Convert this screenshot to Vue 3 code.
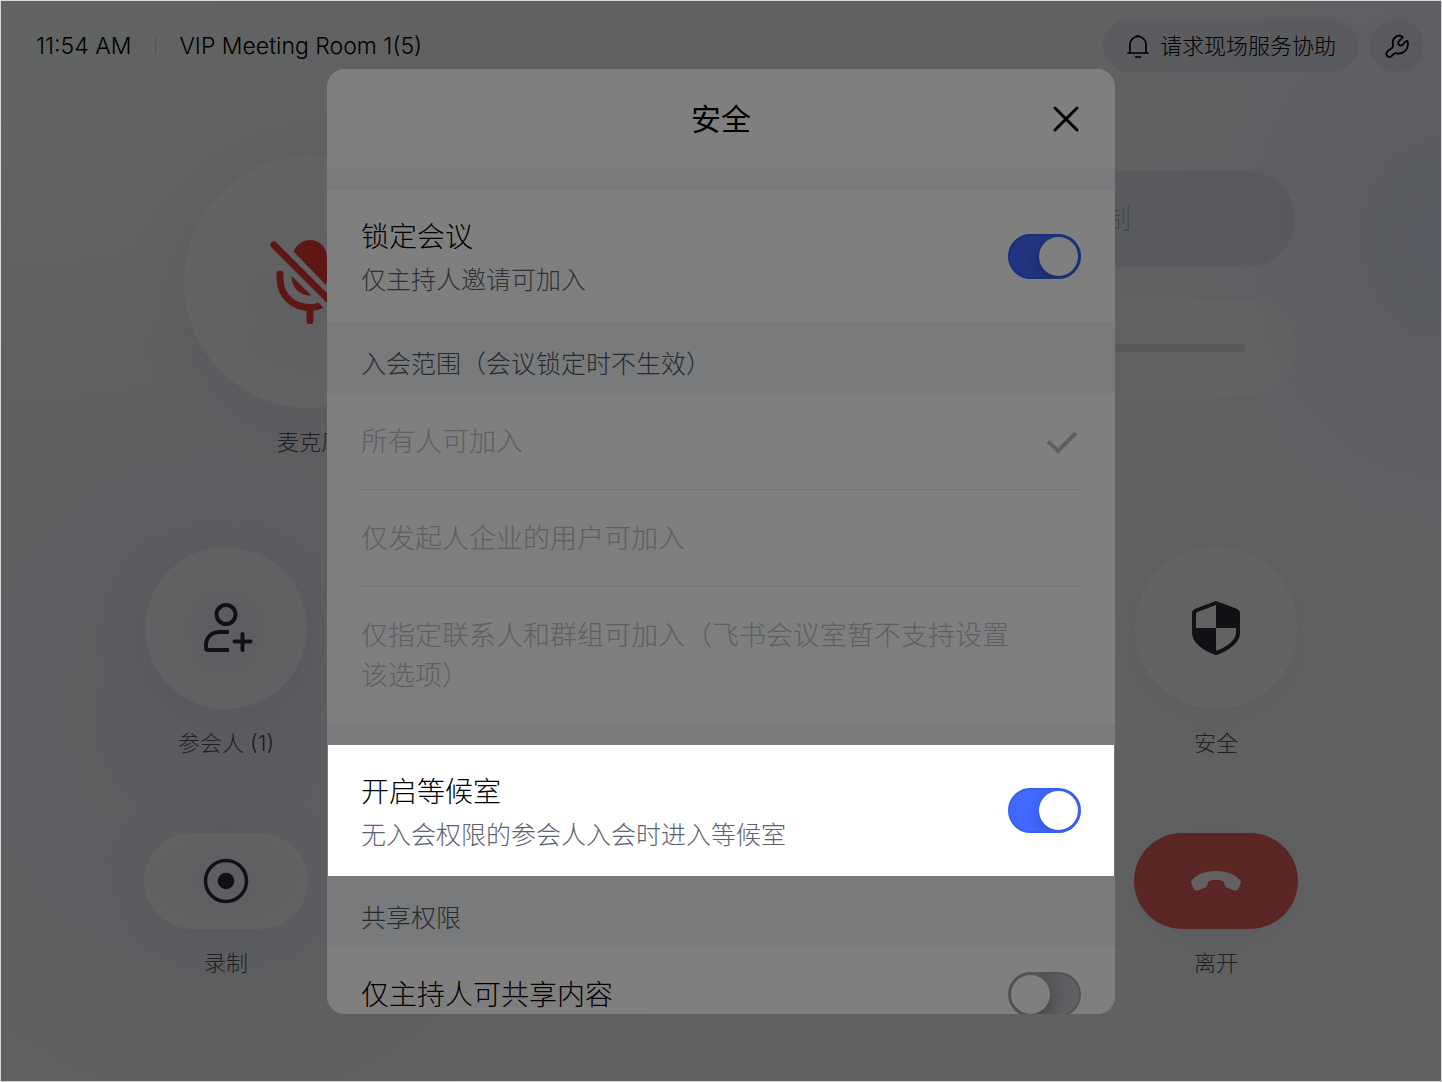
<script setup>
import { ref } from 'vue'

const locked = ref(true)
const waiting = ref(true)
const hostShare = ref(false)
const scope = ref('all')
const scopes = [
  { id: 'all', text: '所有人可加入' },
  { id: 'org', text: '仅发起人企业的用户可加入' },
  { id: 'picked', text: '仅指定联系人和群组可加入（飞书会议室暂不支持设置该选项）' },
]
</script>

<template>
  <div class="room">
    <header class="topbar">
      <time class="clock">11:54 AM</time>
      <span class="divider"></span>
      <span class="room-name">VIP Meeting Room 1(5)</span>
      <button class="assist" type="button">
        <svg width="24" height="24" viewBox="0 0 24 24" fill="none" stroke="currentColor" stroke-width="1.700" stroke-linecap="round" stroke-linejoin="round">
          <path d="M4 19V10.500a8 8 0 0 1 16 0V19" /><path d="M2 19h20M9.500 23h5M10.500 2h3" />
        </svg>
        <span class="assist-text">请求现场服务协助</span>
      </button>
      <button class="tool" type="button" aria-label="设置">
        <svg width="24" height="24" viewBox="0 0 24 24" fill="none" stroke="currentColor" stroke-width="1.800" stroke-linecap="round" stroke-linejoin="round">
          <path d="M16.500 2C12 .8 8 3.800 7.700 8.200c-.1 1.800.5 3 .2 4.300-.4 1.600-2.500 2.600-4.300 4-1.600 1.200-2.500 2.500-2.100 4.200.4 1.800 2.200 2.700 3.900 2.100 1.900-.7 2.700-3 4.300-3.500 1.100-.4 2.400.3 4.300.2 4.800-.2 8.600-3.900 8.900-8.600.1-1.500-.1-2.600-.5-3.500-.3-.6-.9-.7-1.400-.2l-3.300 3.400c-1.200 1.100-2.700 1-3.700 0s-1-2.500.1-3.600l3.200-3.300c.6-.6.400-1.400-.8-1.700z" />
        </svg>
      </button>
    </header>

    <main class="stage">
      <section class="row first">
        <div class="tile mic">
          <button type="button" class="disc big" aria-labelledby="l-mic">
            <svg width="80" height="84" viewBox="0 0 80 84">
              <g fill="#bc2e28">
                <path d="M23.500 11.500C27 4 33 0 40 0c10 0 17 8 17 18v20c0 3-.3 5-1 7z" />
                <path d="M21.500 36l20 19.500C30 56 21.500 48 21.500 36z" />
              </g>
              <g fill="none" stroke="#bc2e28" stroke-width="7" stroke-linecap="round">
                <path d="M4 5l70 70" /><path d="M40 69v12" />
                <path d="M10 34v4c0 18 13 29.500 30 29.500" />
              </g>
              <path d="M40 71c5 0 9-1 13.500-3l-5-5.500c-3 1-5 1.500-8.500 1.500z" fill="#bc2e28" />
            </svg>
          </button>
          <span id="l-mic" class="caption">麦克风</span>
        </div>
        <div class="controls">
          <button type="button" class="bar muted"><span>制</span></button>
          <div class="bar volume"><span class="track"></span></div>
        </div>
      </section>

      <section class="row second">
        <div class="tile">
          <button type="button" class="disc" aria-labelledby="l-people">
            <svg width="46" height="52" viewBox="0 0 46 52" fill="none" stroke="currentColor" stroke-width="4" overflow="visible">
              <circle cx="23" cy="12.500" r="9.500" />
              <path d="M26 30H17C8 30 3 36 3 43v2.500Q3 48 5.500 48H26" />
              <path d="M39.500 32v16M31.500 39.500h16" stroke-linecap="round" />
            </svg>
          </button>
          <span id="l-people" class="caption">参会人 (1)</span>
        </div>
        <div class="tile">
          <button type="button" class="disc" aria-labelledby="l-safe">
            <svg width="48" height="54" viewBox="0 0 48 54">
              <path d="M24 2L44 9.500Q46 10.500 46 12.500V32c0 8-10 16-22 20C12 48 2 40 2 32V12.500Q2 10.500 4 9.500Z" fill="none" stroke="currentColor" stroke-width="4" stroke-linejoin="round" />
              <path d="M24 2l22 9v16H24zM2 27h22v25C12 48 2 40 2 32z" fill="currentColor" />
            </svg>
          </button>
          <span id="l-safe" class="caption">安全</span>
        </div>
      </section>

      <section class="row third">
        <div class="tile">
          <button type="button" class="pill" aria-labelledby="l-rec">
            <svg width="46" height="46" viewBox="0 0 46 46">
              <circle cx="23" cy="23" r="20.500" fill="none" stroke="currentColor" stroke-width="3.500" />
              <circle cx="23" cy="23" r="8.300" fill="currentColor" />
            </svg>
          </button>
          <span id="l-rec" class="caption">录制</span>
        </div>
        <div class="tile">
          <button type="button" class="pill leave" aria-labelledby="l-leave">
            <svg width="50" height="22" viewBox="0 0 50 22">
              <path d="M25 1C15 1 7 4 1.500 9.500c-1.300 1.300-1.500 2.700-1 4.300l2 4.700c.8 1.900 2.500 2.600 4.300 1.900l6.700-2.600c2-.8 3-1.900 3.200-3.800.2-2.300 1-3.200 3.200-3.600 3.400-.6 6.800-.6 10.200 0 2.200.4 3 1.300 3.200 3.600.2 1.900 1.200 3 3.200 3.800l6.700 2.600c1.800.7 3.500 0 4.300-1.900l2-4.700c.5-1.600.3-3-1-4.300C43 4 35 1 25 1z" fill="#c4c4c4" />
            </svg>
          </button>
          <span id="l-leave" class="caption">离开</span>
        </div>
      </section>
    </main>

    <div class="dialog" role="dialog" aria-labelledby="dlg-title">
      <header class="dialog-head">
        <h1 id="dlg-title">安全</h1>
        <button type="button" class="close" aria-label="关闭">
          <svg width="28" height="28" viewBox="0 0 28 28" stroke="currentColor" stroke-width="3" stroke-linecap="round">
            <path d="M3 3l22 22M25 3L3 25" />
          </svg>
        </button>
      </header>
      <div class="gap"></div>

      <label class="setting">
        <span class="words"><span class="name">锁定会议</span><span class="hint">仅主持人邀请可加入</span></span>
        <input v-model="locked" type="checkbox" class="switch">
      </label>

      <h2 class="group">入会范围（会议锁定时不生效）</h2>
      <div class="options">
        <label v-for="s in scopes" :key="s.id" class="option">
          <input v-model="scope" type="radio" name="scope" :value="s.id" disabled>
          <span>{{ s.text }}</span>
          <svg v-if="scope === s.id" width="32" height="24" viewBox="0 0 32 24" fill="none" stroke="currentColor" stroke-width="4">
            <path d="M2 11.500L12 21 30 3" />
          </svg>
        </label>
      </div>
      <div class="gap"></div>

      <label class="setting spotlight">
        <span class="words"><span class="name">开启等候室</span><span class="hint">无入会权限的参会人入会时进入等候室</span></span>
        <input v-model="waiting" type="checkbox" class="switch">
      </label>

      <h2 class="group">共享权限</h2>
      <label class="setting last">
        <span class="words"><span class="name">仅主持人可共享内容</span></span>
        <input v-model="hostShare" type="checkbox" class="switch">
      </label>
    </div>
  </div>
</template>

<style>
body { margin: 0; }
</style>

<style scoped>
* { box-sizing: border-box; }
.room {
  position: relative;
  min-height: 100vh;
  overflow: hidden;
  border: 1px solid #d8d8da;
  font-family: Inter, "Noto Sans CJK SC", sans-serif;
  font-weight: 300;
  color: #1f2329;
  background:
    radial-gradient(ellipse 300px 380px at 100% 22%, #b3b8c6, transparent),
    radial-gradient(ellipse 500px 400px at 0 0, #c6c7c8, transparent),
    radial-gradient(ellipse 600px 640px at 15% 66%, #b8b9c1, transparent),
    radial-gradient(ellipse 500px 200px at 45% 0, #c3c0c4, transparent),
    #c2c3c4;
}
button {
  padding: 0;
  border: 0;
  font: inherit;
  color: inherit;
  background: none;
}
svg { display: block; flex: none; }

.topbar {
  display: flex;
  align-items: center;
  padding: 18px 18px 0 35px;
  font-size: 23px;
  color: #000;
}
.divider { width: 1px; height: 16px; margin: 0 23px 0 24px; background: #a4a5a8; }
.room-name { margin-right: auto; }
.assist {
  display: flex;
  align-items: center;
  gap: 10px;
  height: 53px;
  padding: 0 22px 0 23px;
  border-radius: 27px;
  font-size: 22px;
  background: rgba(150, 156, 175, 0.25);
}
.assist-text { padding-bottom: 4px; }
.tool {
  display: grid;
  place-items: center;
  width: 53px;
  height: 53px;
  margin-left: 12px;
  border-radius: 50%;
  background: rgba(150, 156, 175, 0.25);
}

.stage { padding: 84px 143px 0; }
.row { display: flex; justify-content: space-between; }
.second { margin-top: 88px; }
.third { margin-top: 73px; }
.tile { display: flex; flex-direction: column; align-items: center; min-width: 164px; }
.mic { margin-left: 40px; }
.disc, .pill {
  display: grid;
  place-items: center;
  width: 162px;
  background: radial-gradient(closest-side, transparent, rgba(200, 200, 200, 0.6));
  box-shadow: 0 8px 60px rgba(90, 95, 120, 0.12);
}
.disc { height: 162px; border-radius: 50%; }
.disc.big { width: 252px; height: 252px; }
.pill { width: 164px; height: 96px; border-radius: 48px; }
.pill.leave { background: #b44c48; }
.caption { margin-top: 17px; font-size: 22px; line-height: 34px; color: #3c4046; }
.controls { display: flex; flex-direction: column; gap: 33px; width: 42%; margin: 15px 3px 0 0; }
.bar { display: flex; align-items: center; height: 96px; border-radius: 48px; }
.muted { justify-content: flex-end; padding: 0 164px 4px 0; font-size: 27px; color: #898c94; background: rgba(150, 156, 180, 0.3); }
.volume { padding: 0 50px; background: rgba(200, 199, 197, 0.6); }
.track { width: 100%; height: 8px; border-radius: 4px; background: #aeafb8; }

.dialog {
  position: absolute;
  top: 68px;
  left: 0;
  right: 0;
  width: min(788px, 100%);
  margin: 0 auto;
  border-radius: 18px;
  background: #f1f4f6;
}
.dialog-head {
  display: grid;
  grid-template-columns: 1fr auto 1fr;
  align-items: center;
  height: 99px;
  padding: 0 35px;
  border-radius: 18px 18px 0 0;
  background: #fff;
  color: #000;
}
h1, h2 { margin: 0; }
h1 { grid-column: 2; padding-bottom: 4px; font-size: 30px; font-weight: 400; }
.close { justify-self: end; }
.gap { height: 22px; }
.setting {
  display: flex;
  align-items: center;
  justify-content: space-between;
  height: 132px;
  padding: 0 34px;
  background: #fff;
}
.words { display: flex; flex-direction: column; padding-top: 4px; }
.name { font-size: 28px; line-height: 44px; color: #000; }
.hint { font-size: 25px; line-height: 42px; color: #5c6370; }
.group {
  height: 71px;
  padding: 7px 34px 0;
  font-size: 25px;
  font-weight: 300;
  line-height: 70px;
  color: #51565d;
}
.options { padding: 0 34px; background: #fff; }
.option {
  position: relative;
  display: flex;
  align-items: center;
  justify-content: space-between;
  padding: 29px 3px 27px 0;
  font-size: 27px;
  line-height: 40px;
  color: #bbbfc4;
}
.option + .option { border-top: 1px solid #e6e8ea; }
.option span { max-width: 660px; }
.option input { position: absolute; opacity: 0; }

/* dims everything around the highlighted row */
.spotlight {
  position: relative;
  z-index: 1;
  height: 131px;
  margin: 0 1px;
  padding: 0 33px;
  box-shadow: 0 0 0 2000px rgba(0, 0, 0, 0.5);
}
.last {
  align-items: flex-start;
  height: 67px;
  padding-top: 25px;
  overflow: hidden;
  border-radius: 0 0 18px 18px;
}
.last .words { padding-top: 1px; }
.switch {
  appearance: none;
  flex: none;
  width: 73px;
  height: 45px;
  margin: 0;
  padding: 1px;
  overflow: clip;
  border: 2px solid #a3a6ab;
  border-radius: 23px;
  background: linear-gradient(90deg, #adb0b5 50%, #c2c4c8);
}
.switch::before {
  content: "";
  display: block;
  width: 39px;
  height: 39px;
  border-radius: 50%;
  background: #fff;
  box-shadow: 0 4px 14px rgba(0, 0, 0, 0.24);
}
.switch:checked { border-color: #3361f0; background: #4169ff; }
.switch:checked::before { margin-left: auto; }
</style>
